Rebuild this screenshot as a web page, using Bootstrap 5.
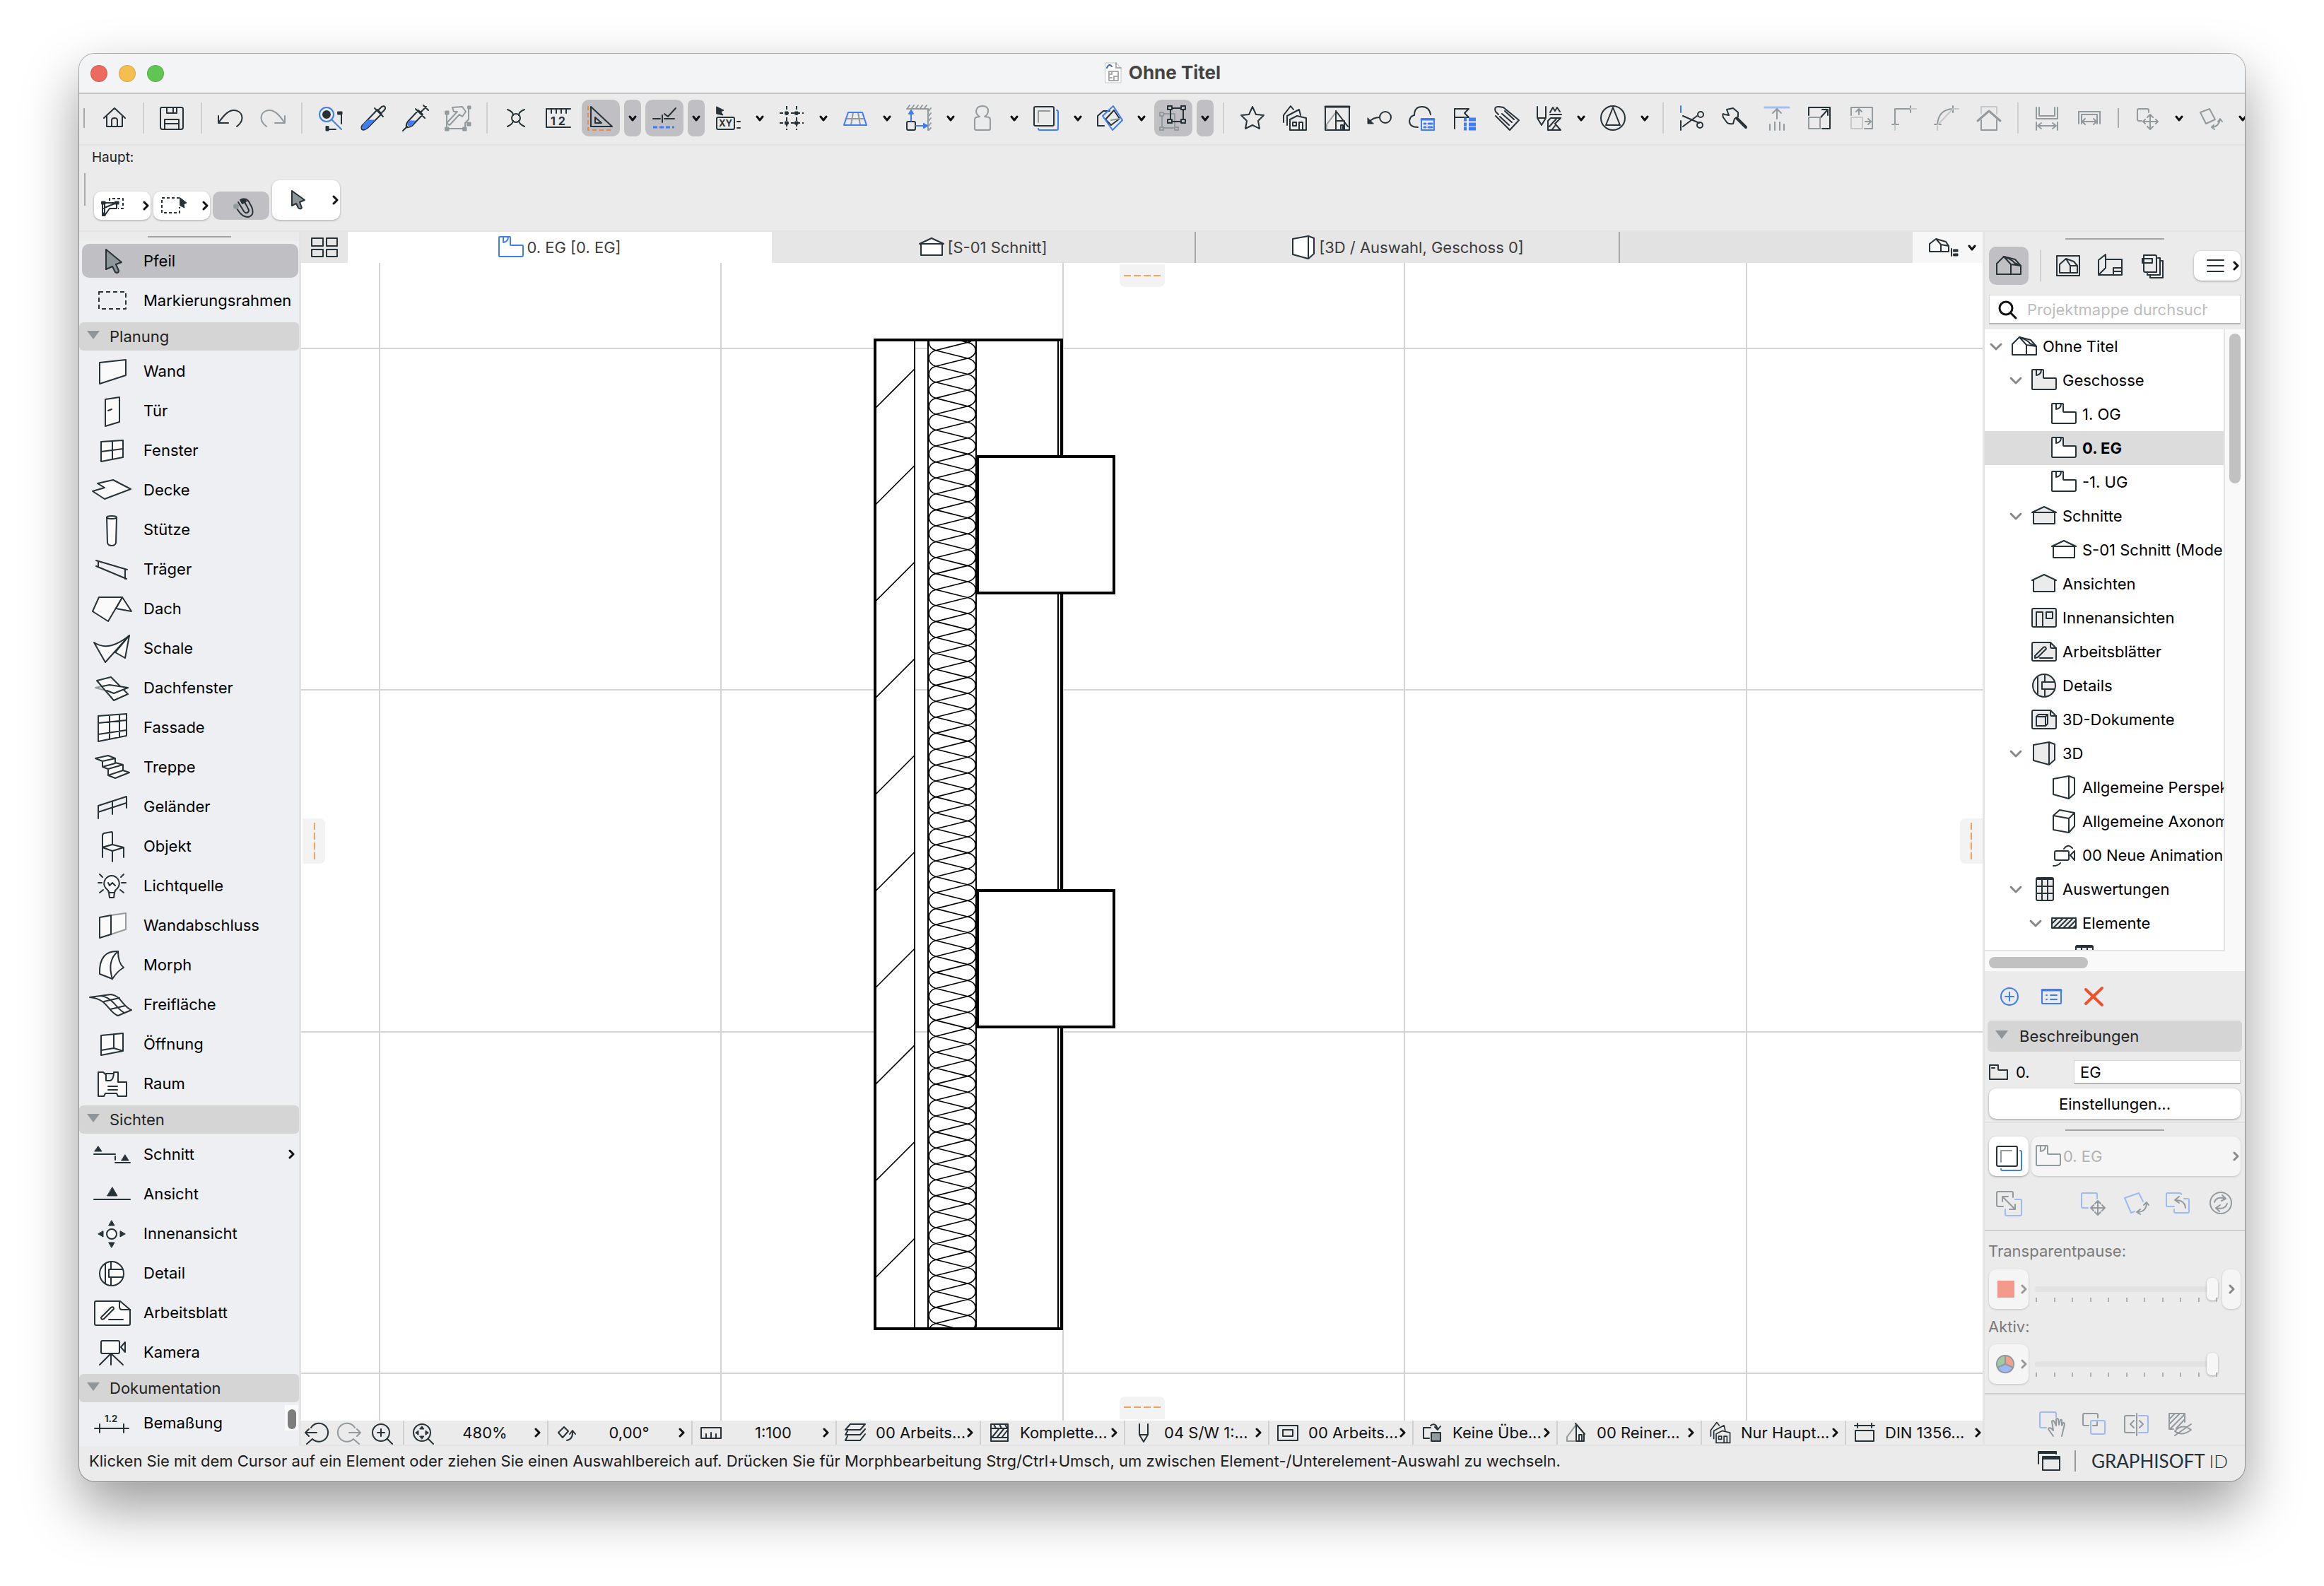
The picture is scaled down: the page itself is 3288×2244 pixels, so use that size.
<!DOCTYPE html>
<html lang="de">
<head>
<meta charset="utf-8">
<meta name="viewport" content="width=device-width, initial-scale=1">
<title>Ohne Titel</title>
<link href="https://cdn.jsdelivr.net/npm/bootstrap@5.3.0/dist/css/bootstrap.min.css" rel="stylesheet">
<style>
:root{--ink:#263238;--blue:#3f7df6;--mute:#939a9e;--panel:#ebebeb;--line:#d2d2d2;--hot:#c0bfc4}
body{font-family:Inter,"Liberation Sans",sans-serif;font-size:22px;line-height:28px;color:#000;background:#fff;padding:76px 112px 148px;height:100vh;overflow:hidden}
button,input{font:inherit;color:inherit}
button{background:none;border:0;padding:0}
svg{fill:none;stroke:currentColor;stroke-width:2;stroke-linejoin:round;stroke-linecap:round;color:var(--ink);flex:none;display:block;overflow:visible}
svg text{stroke:none;fill:currentColor;font-weight:700}
.sol{fill:currentColor}.nof{fill:none}.bl{stroke:var(--blue)}.gr{stroke:var(--mute)}
.frame{background:var(--panel);border-radius:22px;box-shadow:0 0 0 1px rgba(0,0,0,.3),0 36px 80px rgba(0,0,0,.4)}
.titlebar{height:57px;background:#f2f4f6;border-bottom:2px solid #c6c6c6;font-size:26px;font-weight:700;color:#444;padding-bottom:2px}
.lights{left:16px;top:16px;gap:16px}
.lights button{width:24px;height:24px;border-radius:50%;border:1px solid rgba(0,0,0,.12)}
/* toolbar */
.tools{height:73px;border-bottom:2px solid #e3e3e3;padding:0 0 3px 6px;overflow:hidden}
.grip{width:2px;height:28px;background:#a9a9a9;margin-right:12px;flex:none}
.tbtn{width:60px;height:52px;flex:none;display:flex;align-items:center;justify-content:center}
.tbtn svg{width:40px;height:40px}
.tarr{width:30px;height:52px;flex:none;display:flex;align-items:center;justify-content:center}
.tarr svg,.chv{width:14px;height:14px;stroke-width:3;color:#111}
.tbtn.on{width:54px;margin:0 3px;background:var(--hot);border-radius:10px}
.tarr.on{width:24px;margin:0 3px;background:var(--hot);border-radius:8px}
.tsep{width:2px;height:44px;background:#d0d0d0;margin:0 10px;flex:none}
.tsep.strong{background:#a9a9a9;height:28px}
.dim{color:var(--mute)}
/* info box */
.infobox{height:122px;border-bottom:2px solid #e3e3e3;padding:3px 0 0 7px}
.infobox label{font-size:19px;color:#222;padding-left:11px}
.infobox .optrow{height:74px;gap:4px}
.infobox .grip{height:46px;margin:8px 8px 0 0}
.opt{width:80px;height:40px;border-radius:10px;background:#fff;box-shadow:0 1px 3px rgba(0,0,0,.3);display:flex;align-items:center;justify-content:space-between;padding:0 0 0 10px}
.opt svg:first-child{width:36px;height:36px}
.opt.on{background:var(--hot);justify-content:center;padding:0;box-shadow:none}
.opt.tall{width:96px;height:56px;padding-left:20px}
/* left toolbox */
.toolbox{width:314px;background:#eeeff2;border-right:3px solid #e4e4e4;overflow:hidden}
.hbar{height:13px;background:var(--panel);display:flex;align-items:center;justify-content:center;flex:none}
.hbar span{width:118px;height:2px;background:#a3a3a3}
.hbar.tallbar{height:19px}
.tool{height:56px;width:100%;display:flex;align-items:center;padding-left:14px;gap:13px;flex:none;text-align:left}
.tool svg{width:64px;height:48px;fill:#fafafa}
.tool svg.chv{width:14px;height:14px;fill:none}
.tool.on{height:48px;margin:4px 1px 4px 4px;width:306px;padding-left:10px;border-radius:10px;background:var(--hot)}
.grp{height:40px;width:100%;background:#d5d5d5;border-radius:6px;margin:3px 0 1px;padding-left:11px;gap:14px;display:flex;align-items:center;color:#222;flex:none}
.grp .tri{width:18px;height:12px;background:#8f9599;clip-path:polygon(0 0,100% 0,50% 100%);margin-bottom:4px}
.sbox{width:19px;height:36px;background:#fafafa;right:1px;bottom:22px}
.sbox span{display:block;width:12px;height:28px;margin:6px auto 0 4px;border-radius:6px;background:#7d7d7d}
/* tabs */
.tabs{height:44px;background:#e2e2e2}
.tabs .tab{width:600px;background:#e6e6e6;border-right:2px solid #a9a9a9;color:#3c3c3c;gap:4px}
.tabs .tab.on{background:#fff;border:0}
.tabs .grid4{width:66px;background:#e6e6e6}
.tabs .pick{width:99px;background:#f7f7f7;gap:10px}
.tabs svg.i{width:36px;height:34px}
.stage{background:#fff}
/* view bar */
.viewbar{height:36px;border-bottom:2px solid #e3e3e3;color:#111}
.viewbar .cell{width:204px;border-left:2px solid #d0d0d0;height:34px;padding:0 7px 0 9px;display:flex;align-items:center;white-space:nowrap}
.viewbar .cell:last-child{flex:1 1 0;padding-right:0}
.viewbar .cell>span{flex:1 1 0;min-width:0}
.viewbar svg.i{width:34px;height:34px}
.viewbar .cell svg.i{margin-right:12px}
/* right panel */
.side{width:371px;border-left:3px solid #e4e4e4}
.side .hbar span{width:140px}
.pop{background:#fff;border-radius:10px;box-shadow:0 1px 3px rgba(0,0,0,.35)}
.navrow{padding:0 6px;height:54px;margin-top:2px}
.navb{width:60px;height:54px;display:flex;align-items:center;justify-content:center}
.navb svg{width:36px;height:34px}
.find{margin:14px 6px 7px;height:42px;background:#fff;border:1px solid #d5d5d5;border-bottom:2px solid #b5b5b5;padding:0 46px 0 13px;gap:14px}
.find input{border:0;outline:0;background:none;width:100%;min-width:0;padding:0}
.find input::placeholder{color:#bdbdbd;opacity:1}
.tree{height:880px;background:#fff;border-right:2px solid #e4e4e4;border-bottom:2px solid #e4e4e4;overflow:hidden;width:340px}
.node{height:48px;display:flex;align-items:center;padding-left:6px;white-space:nowrap;width:100%;text-align:left;flex:none}
.node .tw{width:20px;margin-right:12px;flex:none}
.node .tw svg{width:20px;height:14px;stroke-width:3;color:#888;margin:auto}
.node svg.i{width:36px;height:34px;margin-right:8px;fill:#fff}
.node svg.f{fill:#ebebeb}
.l1{padding-left:34px}.l2{padding-left:62px}.l3{padding-left:90px}
.track{background:#f9f9f9}
.knob{background:#c1c1c1;border-radius:8px}
.act{width:60px;height:52px;display:flex;align-items:center;justify-content:center}
.act svg{width:36px;height:34px}
.lite{background:#f5f5f5;box-shadow:0 1px 3px rgba(0,0,0,.18);border-radius:10px}
.rule{height:2px;background:#cfcfcf}
.opac{appearance:none;-webkit-appearance:none;width:100%;height:32px;background:none;display:block;margin:0}
.opac::-webkit-slider-runnable-track{height:8px;border-radius:4px;background:#e2e2e2}
.opac::-webkit-slider-thumb{-webkit-appearance:none;width:16px;height:32px;margin-top:-12px;border-radius:7px;background:#f6f6f6;box-shadow:0 1px 3px rgba(0,0,0,.3)}
.ticks{height:6px;padding:0 1px;margin-top:-4px}.ticks i{width:2px;height:6px;background:#b0b0b0}
.faded{color:#7a7a7a}
.storyname{min-width:0;height:34px;border:1px solid #d5d5d5;border-bottom:2px solid #b5b5b5;background:#fff;padding:0 8px}
.status{height:50px;padding:0 24px 8px 14px;color:#1c1c1c}
.brandmark{font-family:Lato,sans-serif;font-size:26px;color:var(--ink)}
</style>
<script src="https://cdn.jsdelivr.net/npm/bootstrap@5.3.0/dist/js/bootstrap.bundle.min.js"></script>
</head>
<body class="d-flex m-0">
<svg width="0" height="0" class="position-absolute" aria-hidden="true">
<symbol id="dn" viewBox="0 0 14 14"><path d="M3 5L7 10L11 5"/></symbol>
<symbol id="rt" viewBox="0 0 14 14"><path d="M5 2L10 7L5 12"/></symbol>
<symbol id="tw" viewBox="0 0 20 14"><path d="M3 4L10 11L17 4"/></symbol>
<symbol id="home3" viewBox="0 0 36 34"><path d="M1 29V14L11 4L27 8L35 17V29Z"/><path class="nof" d="M11 4L21 15V29M21 15L35 17M11 4C18 7 24 9 26 13L35 17"/></symbol>
<symbol id="storey" viewBox="0 0 36 34"><path d="M2 2H16Q17 2 17 3V13Q17 14 18 14H34Q35 14 35 15V28Q35 30 33 30H2Q1 30 1 29V3Q1 2 2 2Z"/><path class="nof" d="M7 2V10Q14 9 14 2"/></symbol>
<symbol id="sect" viewBox="0 0 36 34"><path d="M1 12L18 4L35 12Z"/><path d="M3 12H33V28H3Z"/></symbol>
<symbol id="elev" viewBox="0 0 36 34"><path d="M1 12L18 4L35 12H33V28H3V12Z" stroke="none"/><path class="nof" d="M1 12L18 4L35 12M3 12V28H33V12"/></symbol>
<symbol id="inner" viewBox="0 0 36 34"><rect x="1" y="4" width="34" height="26" rx="2"/><path class="nof" d="M7 30V9H16V30M21 9H30V18H21Z"/></symbol>
<symbol id="sheet" viewBox="0 0 36 34"><path d="M3 4H27L35 12V28Q35 30 33 30H3Q1 30 1 28V6Q1 4 3 4Z"/><path class="nof" d="M27 4V10Q27 12 29 12H35M12 26H30"/><path d="M5 26V23L17 11Q20 9 21 13L9 25Z"/></symbol>
<symbol id="detail" viewBox="0 0 36 34"><circle cx="18" cy="17" r="16"/><path class="nof" d="M9 4V30M19 1V12M19 22V33M33 12H15V22H33"/></symbol>
<symbol id="doc3" viewBox="0 0 36 34"><path d="M3 4H27L35 12V28Q35 30 33 30H3Q1 30 1 28V6Q1 4 3 4Z"/><path class="nof" d="M27 4V10Q27 12 29 12H35M7 13H20V26H7ZM7 13L10 10H23L20 13M23 10V23L20 26"/></symbol>
<symbol id="box3" viewBox="0 0 36 34"><path d="M3 5L25 1V33L3 27ZM25 1L33 4V26L25 33"/></symbol>
<symbol id="axo" viewBox="0 0 36 34"><path d="M3 9L25 13V33L3 29ZM3 9L12 1L33 5L25 13L3 9M33 5V24L25 33V13"/></symbol>
<symbol id="cam" viewBox="0 0 36 34"><rect x="5" y="11" width="20" height="13" rx="2"/><path d="M27 17L33 11V24ZM18 8Q24 0 30 7M3 32Q10 32 13 28" class="nof"/></symbol>
<symbol id="tab9" viewBox="0 0 36 34"><rect x="7" y="1" width="24" height="32" rx="2"/><path class="nof" d="M7 3H31M7 13H31M7 23H31M15 3V33M23 3V33"/></symbol>
<symbol id="hat" viewBox="0 0 36 34"><rect x="1" y="10" width="34" height="14"/><path class="nof" d="M1 18L9 10M3 24L16 11M10 24L23 11M17 24L30 11M24 24L35 13M31 24L35 20"/></symbol>
<symbol id="homes" viewBox="0 0 40 40"><path d="M4 26V16L14 3L18 8M9 30V17L26 8L28 16M13 37V22L23 17L36 20V37ZM17 31V26H22V31ZM26 37V26H31V37"/></symbol>
</svg>

<div class="frame flex-grow-1 d-flex flex-column overflow-hidden">
 <header class="titlebar position-relative d-flex align-items-center justify-content-center gap-2 flex-shrink-0">
  <div class="lights position-absolute d-flex"><button aria-label="Schließen" style="background:#ec6a5e"></button><button aria-label="Minimieren" style="background:#f4bf4f"></button><button aria-label="Vergrößern" style="background:#61c554"></button></div>
  <svg width="28" height="30" style="stroke-width:1"><path fill="#fff" stroke="#c4c4c4" d="M3 1H18L25 8V29H3Z"/><path stroke="#aaa" stroke-width="2" d="M18 1V8H25M8 13H21V26H8ZM12 13V17H8M15 26V20H21M8 22H12"/><path stroke="#3f5fbf" stroke-width="2" d="M5 8Q8 1 12 6"/></svg>
  <span>Ohne Titel</span>
 </header>

 <nav class="tools d-flex align-items-center flex-shrink-0" aria-label="Werkzeugleiste">
  <span class="grip"></span>
  <button class="tbtn" aria-label="Start"><svg><path d="M5 20L20 6L35 20M9 17V32H31V17M16 32V23Q16 20 20 20T24 23V32"/></svg></button><span class="tsep"></span>
  <button class="tbtn" aria-label="Sichern"><svg><path d="M5 5H33Q35 5 35 8V33Q35 36 32 36H6Q3 36 3 33V7Q3 5 5 5ZM12 5V13H26V5M21 6V12M9 36V22H29V36M10 28H28"/></svg></button><span class="tsep"></span>
  <button class="tbtn" aria-label="Widerrufen"><svg><path d="M3 17V27H17M3 27C12 14 18 9 25 9C35 9 43 21 29 32"/></svg></button>
  <button class="tbtn dim" aria-label="Wiederholen"><svg class="dim"><path d="M37 17V27H23M37 27C28 14 22 9 15 9C5 9 -3 21 11 32"/></svg></button><span class="tsep"></span>
  <button class="tbtn" aria-label="Suchen"><svg><circle class="bl" cx="14" cy="15" r="10"/><path class="bl" d="M22 23L35 36"/><circle class="sol" cx="14" cy="15" r="5"/><path d="M35 13V28M14 36H27"/><path class="sol" d="M30 11H36V15H30ZM13 32V38H17V32Z" stroke-width="1"/></svg></button>
  <button class="tbtn" aria-label="Parameter aufnehmen"><svg><path d="M4 36Q2 32 7 28L26 8L32 14L12 34Q7 38 4 36ZM22 6L34 18M27 9L32 4Q36 2 37 5Q38 8 31 13"/><path d="M5 35Q4 31 8 27L12 23H22L12 33Q8 37 5 35Z" fill="#3f7df6" class="bl" stroke-width="1"/></svg></button>
  <button class="tbtn" aria-label="Parameter übertragen"><svg><path d="M2 38L8 32M7 33Q6 29 9 25L24 9L30 15L15 31Q10 34 7 33ZM20 7L33 20M27 12L35 4M31 2L38 9"/><path d="M9 30Q8 28 11 24H20L15 30Q11 32 9 30Z" fill="#3f7df6" class="bl" stroke-width="1"/></svg></button>
  <button class="tbtn" aria-label="Bearbeiten"><svg class="dim"><path d="M4 12V35H30V27L35 22V5M12 5L26 4L31 11L26 18L22 15L8 30L4 27L19 11H14Z"/><path class="sol" d="M2 10H7V15H2ZM2 33H7V38H2ZM27 33H32V38H27ZM33 26H38V31H33ZM34 3H38V7H34Z" stroke-width="1"/></svg></button><span class="tsep"></span>
  <button class="tbtn" aria-label="Schnittpunkt"><svg><path d="M8 8Q16 11 16 16M32 8Q24 11 24 16M8 32Q16 28 16 24M32 32Q24 28 24 24"/><circle cx="20" cy="20" r="6"/></svg></button>
  <button class="tbtn" aria-label="Maße"><svg><path d="M37 7H3V33H37M10 8V13M17 8V13M24 8V13M31 8V13"/><text x="9" y="30" font-size="16">1 2</text></svg></button>
  <button class="tbtn on" aria-label="Hilfslinien"><svg><path d="M6 4V32H36ZM12 19V27H21Z"/><path stroke="#f0883a" stroke-dasharray="6 4" stroke-linecap="butt" d="M2 3V37H38"/></svg></button><button class="tarr on" aria-label="Mehr"><svg><use href="#dn"/></svg></button>
  <button class="tbtn on" aria-label="Fangpunkte"><svg><path d="M20 14L25 18L36 6M4 21H14M20 21H34M17 16V26"/><path class="bl" stroke-dasharray="6 3" stroke-linecap="butt" stroke-width="3" d="M4 33H34"/></svg></button><button class="tarr on" aria-label="Mehr"><svg><use href="#dn"/></svg></button>
  <button class="tbtn" aria-label="Koordinaten"><svg><path class="sol" d="M4 4L14 9L10 11L13 16L4 14Z" stroke-width="1"/><rect x="4" y="19" width="25" height="17" rx="2"/><path d="M33 25H37M33 34H37"/><text x="7" y="32" font-size="13">XY</text></svg></button><button class="tarr" aria-label="Mehr"><svg><use href="#dn"/></svg></button>
  <button class="tbtn" aria-label="Raster"><svg><path stroke-dasharray="5 3" stroke-linecap="butt" d="M13 3V37M27 3V37M3 13H37M3 27H37"/><path class="sol" d="M11 11H15V15H11ZM25 11H29V15H25ZM11 25H15V29H11ZM25 25H29V29H25Z" stroke-width="1"/></svg></button><button class="tarr" aria-label="Mehr"><svg><use href="#dn"/></svg></button>
  <button class="tbtn" aria-label="Arbeitsebene"><svg><path class="gr" d="M7 21H33M17 12L14 30M24 12L27 30"/><path class="bl" d="M10 12H30L36 30H4Z"/></svg></button><button class="tarr" aria-label="Mehr"><svg><use href="#dn"/></svg></button>
  <button class="tbtn" aria-label="Ursprung"><svg><path class="gr" d="M3 7H33V37M4 6L7 2M10 6L13 2M16 6L19 2M22 6L25 2M28 6L31 2M34 10L37 6M34 17L37 13M34 24L37 20M34 31L37 27M34 37L37 34"/><rect x="3" y="25" width="12" height="12" rx="2"/><path class="bl" d="M9 24V10M6 14L9 9L12 14ZM16 31H31M27 28L32 31L27 34Z" fill="#3f7df6"/></svg></button><button class="tarr" aria-label="Mehr"><svg><use href="#dn"/></svg></button>
  <button class="tbtn" aria-label="Schwerkraft"><svg class="dim"><path d="M16 18Q11 15 11 10Q12 3 20 3Q28 3 28 10Q28 15 23 18L29 19Q31 20 31 22V35Q31 37 29 37H11Q9 37 9 35V22Q9 20 11 19Z"/></svg></button><button class="tarr" aria-label="Mehr"><svg><use href="#dn"/></svg></button>
  <button class="tbtn" aria-label="Transparentpause"><svg><rect x="3" y="4" width="28" height="27" rx="2"/><path class="gr" d="M9 26V10H25"/><path class="bl" d="M35 9Q37 9 37 11V35Q37 37 35 37H11Q9 37 9 35"/></svg></button><button class="tarr" aria-label="Mehr"><svg><use href="#dn"/></svg></button>
  <button class="tbtn" aria-label="Schnittebenen"><svg><path d="M12 31H3V17L11 10L20 10"/><path d="M14 22L26 9L34 21L22 30Z"/><path class="gr" d="M22 23L34 21"/><path class="bl" d="M25 3L38 23L24 37L10 17Z"/></svg></button><button class="tarr" aria-label="Mehr"><svg><use href="#dn"/></svg></button>
  <button class="tbtn on" aria-label="Gruppen"><svg><path class="gr" d="M4 14H22V34H4Z"/><path d="M16 6H34V25H16Z"/><path fill="#c0bfc4" d="M12 3H18V8H12ZM31 3H37V8H31ZM12 22H18V27H12ZM31 22H37V27H31Z"/><path class="gr" fill="#c0bfc4" d="M1 12H6V17H1ZM1 33H6V37H1ZM22 33H27V37H22Z"/></svg></button><button class="tarr on" aria-label="Mehr"><svg><use href="#dn"/></svg></button><span class="tsep"></span>
  <button class="tbtn" aria-label="Favoriten"><svg><path d="M20 4L25 15L36 16L28 24L30 35L20 30L10 35L12 24L4 16L15 15Z"/></svg></button>
  <button class="tbtn" aria-label="Projektmappe"><svg><use href="#homes"/></svg></button>
  <button class="tbtn" aria-label="Ausschnitt"><svg><path stroke-width="3" d="M3 4H37"/><path d="M3 4H37V37H3Z"/><path class="gr" d="M5 36V29L18 12"/><path d="M18 10L35 32M18 10V37M20 24H30V37M25 37V30H28V37"/></svg></button>
  <button class="tbtn" aria-label="Etikett"><svg><circle cx="28" cy="19" r="8"/><path d="M20 19Q10 19 5 26"/><path class="sol" d="M3 20V28H11Z" stroke-width="1"/></svg></button>
  <button class="tbtn" aria-label="Cloud"><svg><path d="M14 33Q2 33 2 24Q3 17 9 16Q9 4 20 4Q30 4 32 15"/><path class="bl" d="M19 21H37V37H19Z"/><path class="bl" stroke-width="3" d="M19 22H37M23 28H25M29 28H34M23 33H25M29 33H34"/></svg></button>
  <button class="tbtn" aria-label="Issues"><svg><path d="M6 35V7H26L20 13L26 19H7"/><path class="bl" stroke-width="5" stroke-linecap="butt" d="M19 22H23M26 22H36M19 29H23M26 29H36M19 35H23M26 35H36"/></svg></button>
  <button class="tbtn" aria-label="Klassifizierung"><svg><path d="M8 15L4 11Q1 3 9 4L15 5L37 23L24 37L4 17M13 14L27 26M17 10L30 22M10 18L23 30"/></svg></button>
  <button class="tbtn" aria-label="Baustoffe"><svg><path d="M3 4V20L9 30L15 20V4M3 20H15M21 12L25 5L28 10L31 5L35 11M21 15H37M18 37H36L28 28L36 20H22L18 24ZM20 32L30 21M24 36L28 31"/></svg></button><button class="tarr" aria-label="Mehr"><svg><use href="#dn"/></svg></button>
  <button class="tbtn" aria-label="Norden"><svg><circle cx="20" cy="20" r="17"/><path d="M20 5L30 30H10Z"/></svg></button><button class="tarr" aria-label="Mehr"><svg><use href="#dn"/></svg></button><span class="tsep"></span>
  <button class="tbtn" aria-label="Trennen"><svg><path class="bl" d="M4 3V12"/><path d="M4 24V37M7 17L30 27M7 32L27 17"/><circle cx="32" cy="15" r="4"/><circle cx="31" cy="30" r="4"/></svg></button>
  <button class="tbtn" aria-label="Verändern"><svg><path d="M9 8L18 6L25 12V18L20 21L18 28Q11 29 9 26L4 19Q2 12 6 15L12 16Z"/><path stroke-width="4" d="M23 20L36 33"/></svg></button>
  <button class="tbtn" aria-label="Anheben"><svg class="dim"><path stroke="#a3bff5" stroke-width="3" d="M3 5H37"/><path d="M20 21V8M14 13L20 7L26 13M10 29V37M17 26V37M24 26V37M30 29V37"/></svg></button>
  <button class="tbtn" aria-label="Größe ändern"><svg><path d="M5 16V5H35V35H24M22 19L32 8M24 8H32V16"/><path class="gr" d="M5 19H21V35H5Z"/></svg></button>
  <button class="tbtn" aria-label="Strecken"><svg class="dim"><path d="M5 16V5H35V35H24"/><path stroke="#c6c8ca" d="M5 19H21V35H5Z"/><path d="M16 15V8M12 11L16 7L20 11M25 25H33M29 21L33 25L29 29"/></svg></button>
  <button class="tbtn" aria-label="Ecke"><svg class="dim"><path d="M7 30V7H29M3 29H12M29 3V12"/><path stroke="#c6c8ca" d="M7 30V37M29 7H37"/></svg></button>
  <button class="tbtn" aria-label="Abrunden"><svg class="dim"><path d="M7 30Q8 8 29 7M3 29H12M29 3V12"/><path stroke="#c6c8ca" d="M7 37V30L29 7H37"/></svg></button>
  <button class="tbtn" aria-label="Dach anpassen"><svg class="dim"><path stroke="#c6c8ca" d="M9 14V4H31V14"/><path d="M9 23V37H31V23"/><path stroke-width="3" d="M4 24L20 10L36 24"/></svg></button><span class="tsep"></span>
  <button class="tbtn" aria-label="Verteilen"><svg class="dim"><path d="M5 5V21H35V5M9 5V17H31V5M5 26V37M35 26V37M7 31H33M12 27L7 31L12 35M28 27L33 31L28 35"/></svg></button>
  <button class="tbtn" aria-label="Ausrichten"><svg class="dim"><path d="M5 28V11H35V28M9 28V15H31V28M10 25H30M14 21L10 25L14 29M26 21L30 25L26 29"/></svg></button><span class="tsep strong"></span>
  <button class="tbtn" aria-label="Bewegen"><svg class="dim"><path d="M12 24H8Q6 24 6 22V9Q6 7 8 7H20Q22 7 22 9V12M24 16V35M14 25H35M20 19L24 15L28 19M20 32L24 36L28 32M17 22L14 25L17 28M32 22L35 25L32 28"/></svg></button><button class="tarr" aria-label="Mehr"><svg><use href="#dn"/></svg></button>
  <button class="tbtn" aria-label="Drehen"><svg class="dim"><path d="M5 12L18 7L26 22L13 28ZM22 33Q31 32 33 22M30 25L33 21L36 25M24 30L21 33L25 36"/></svg></button><button class="tarr" aria-label="Mehr"><svg><use href="#dn"/></svg></button>
 </nav>

 <section class="infobox flex-shrink-0">
  <label class="d-block">Haupt:</label>
  <div class="optrow d-flex align-items-end">
   <span class="grip align-self-start"></span>
   <button class="opt" aria-label="Auswahlmethode"><svg><path d="M2 14H22V22H12L5 32H2ZM5 14V32M2 22L22 14"/><path stroke-dasharray="4 3" stroke-linecap="butt" d="M12 11V8H31V22H24"/><path class="sol" d="M1 12H6V16H1ZM20 12H25V16H20ZM2 28H6V32H2Z" stroke-width="1"/></svg><svg class="chv"><use href="#rt"/></svg></button>
   <button class="opt" aria-label="Rahmen"><svg><path stroke-dasharray="4 3" stroke-linecap="butt" d="M27 7H2V28H27V20"/><path class="sol" d="M28 7L37 14L33 16L34 21L28 18Z" stroke-width="1"/></svg><svg class="chv"><use href="#rt"/></svg></button>
   <button class="opt on" aria-label="Magnet"><svg><path d="M14 13L22 26Q25 30 28 27Q30 25 28 22L21 9Q27 7 31 16Q36 24 34 30Q30 36 23 33Q18 32 10 19"/><path class="sol" d="M17 10Q22 6 25 12L20 15Z"/><circle cx="11" cy="19" r="4" fill="#939a9e" stroke="none"/></svg></button>
   <button class="opt tall" aria-label="Pfeil"><svg><path fill="#8e9599" d="M8 5L26 18L19 21L22 29Q20 32 17 29L14 23L8 26Z"/></svg><svg class="chv"><use href="#rt"/></svg></button>
  </div>
 </section>

 <div class="d-flex flex-grow-1" style="min-height:0">
  <aside class="toolbox position-relative d-flex flex-column flex-shrink-0">
   <div class="hbar"><span></span></div>
   <button class="tool on"><svg><path fill="#8e9599" d="M24 8L46 26L38 29L42 38Q42 41 39 41L37 40L33 32L24 36Z"/></svg>Pfeil</button>
   <button class="tool"><svg><path class="nof" stroke-dasharray="6 4" stroke-linecap="butt" d="M14 12H52V36H14Z"/></svg>Markierungsrahmen</button>
   <button class="grp"><span class="tri"></span>Planung</button>
   <button class="tool"><svg><path d="M15 12L52 8V30L15 42Z"/></svg>Wand</button>
   <button class="tool"><svg><path d="M23 8L43 5V40L23 46ZM27 24L32 22"/></svg>Tür</button>
   <button class="tool"><svg><path d="M17 12L48 10V34L17 40ZM33 11V37M17 26L48 22"/></svg>Fenster</button>
   <button class="tool"><svg><path d="M5 26L22 37L59 23L34 10L12 15L22 21Z"/></svg>Decke</button>
   <button class="tool"><svg><path d="M25 7L26 43Q27 47 32 47T38 43L39 7"/><ellipse cx="32" cy="7" rx="7" ry="2"/></svg>Stütze</button>
   <button class="tool"><svg><path d="M10 12L54 25M10 20L53 38M13 13V21M51 24V38"/></svg>Träger</button>
   <button class="tool"><svg><path d="M38 24L47 8L60 28Z"/><path d="M14 8H47L27 42L5 28Z"/></svg>Dach</button>
   <button class="tool"><svg><path d="M57 6L51 38L37 30Z"/><path d="M7 16Q28 30 57 6L23 44Z"/></svg>Schale</button>
   <button class="tool"><svg><path class="gr" d="M24 28L9 24L19 22"/><path d="M11 14L31 9L55 33L35 42Z"/><path d="M19 22L29 20L55 24L35 32L25 28"/></svg>Dachfenster</button>
   <button class="tool"><svg><path d="M13 8L53 5V36L13 44ZM29 7V41M43 6V38M13 18L53 14M13 34L53 28"/></svg>Fassade</button>
   <button class="tool"><svg><path d="M9 12L27 8L37 12L19 16ZM19 16V24L37 19V12M19 24L27 27L48 21L37 18M27 27V36L48 29V21M27 36L37 40L57 32L48 29"/></svg>Treppe</button>
   <button class="tool"><svg><path class="nof" d="M13 41V23L53 10V26M13 32L53 19M33 17V35"/></svg>Geländer</button>
   <button class="tool"><svg><path d="M19 40V9Q19 7 21 6L32 4Q33 4 33 6V22L19 26"/><path d="M19 26L33 22L49 26L33 31ZM33 31V46M49 26V40"/></svg>Objekt</button>
   <button class="tool"><svg><path d="M28 34Q28 31 24 28Q19 22 23 15Q27 10 32 10T41 15Q45 22 40 28Q36 31 36 34L35 41H29L28 34H36"/><path class="nof" d="M27 20L29 24L33 20L37 24M15 8L19 12M49 8L45 12M13 20H18M46 20H52M15 34L20 30M49 34L44 30"/></svg>Lichtquelle</button>
   <button class="tool"><svg><path class="gr" d="M31 10L52 7V30L31 37"/><path d="M15 13L31 10V37L15 42Z"/></svg>Wandabschluss</button>
   <button class="tool"><svg><path d="M15 37C14 14 24 4 41 5C41 18 44 24 49 28Q40 33 33 44Z"/><path class="nof" d="M41 5Q25 18 33 44"/></svg>Morph</button>
   <button class="tool"><svg><path d="M1 14L31 10C46 12 46 26 60 32L41 40C27 36 27 16 1 14Z"/><path class="nof" d="M21 20L43 15M30 31L51 26M16 12C34 14 38 30 50 36"/></svg>Freifläche</button>
   <button class="tool"><svg><path d="M17 12L48 9V34L17 40ZM35 10V30L17 33M35 30L48 34"/></svg>Öffnung</button>
   <button class="tool"><svg><path d="M13 8H20L24 12V20H30Q35 18 35 8H41V22H53V42H41L39 38H23L21 42H13Z"/><path class="nof" d="M24 10H35M27 28H40M27 33H40"/></svg>Raum</button>
   <button class="grp"><span class="tri"></span>Sichten</button>
   <button class="tool"><svg><path class="nof" d="M7 24H37M37 27V32M37 36H58"/><path class="sol" stroke-width="1" d="M8 20H18L13 13ZM46 33H56L51 25Z"/></svg>Schnitt<svg class="chv ms-auto me-1"><use href="#rt"/></svg></button>
   <button class="tool"><svg><path d="M7 32H58"/><path class="sol" stroke-width="1" d="M26 27H40L33 15Z"/></svg>Ansicht</button>
   <button class="tool"><svg><circle cx="32" cy="25" r="7"/><path class="sol" stroke-width="1" d="M28 13H36L32 6ZM28 37H36L32 44ZM20 21V29L13 25ZM44 21V29L51 25Z"/></svg>Innenansicht</button>
   <button class="tool"><svg><circle cx="32" cy="25" r="17"/><path class="nof" d="M23 11V39M31 8V19M31 30V42M48 19H28V30H48"/></svg>Detail</button>
   <button class="tool"><svg><path d="M10 8H44L58 20V40Q58 42 56 42H10Q8 42 8 40V10Q8 8 10 8Z"/><path class="nof" d="M43 8V16Q43 20 47 20H58M28 34H48M17 31L31 17Q35 15 35 19L21 33Q17 35 17 31Z"/></svg>Arbeitsblatt</button>
   <button class="tool"><svg><rect x="17" y="8" width="26" height="18" rx="2"/><path d="M45 17L51 10V24ZM31 26L15 42M31 26V42M31 26L48 42"/></svg>Kamera</button>
   <button class="grp"><span class="tri"></span>Dokumentation</button>
   <button class="tool"><svg><path d="M8 32H56M15 26V38M49 26V38"/><text x="22" y="23" font-size="13">1.2</text></svg>Bemaßung</button>
   <div class="sbox position-absolute"><span></span></div>
  </aside>

  <main class="d-flex flex-column flex-grow-1" style="min-width:0">
   <div class="tabs d-flex flex-shrink-0">
    <button class="grid4 d-flex align-items-center justify-content-center" aria-label="Übersicht"><svg width="38" height="28"><path d="M1 1H17V12H1ZM22 1H37V12H22ZM1 17H17V27H1ZM22 17H37V27H22Z"/></svg></button>
    <button class="tab on d-flex align-items-center justify-content-center"><svg class="i" style="color:var(--blue)"><use href="#storey"/></svg>0. EG [0. EG]</button>
    <button class="tab d-flex align-items-center justify-content-center"><svg class="i" style="fill:#fff"><use href="#sect"/></svg>[S-01 Schnitt]</button>
    <button class="tab d-flex align-items-center justify-content-center"><svg class="i" style="fill:#fff"><use href="#box3"/></svg>[3D / Auswahl, Geschoss 0]</button>
    <button class="pick ms-auto d-flex align-items-center justify-content-end pe-2" aria-label="Ansicht wählen"><svg width="44" height="28"><path d="M1 20V9L10 2L24 6L28 12V20ZM10 2L17 10V20M17 10L28 12M32 16V26"/><path class="sol" stroke-width="1" d="M35 17H41V20H35ZM35 23H41V26H35Z"/></svg><svg class="chv"><use href="#dn"/></svg></button>
   </div>
   <div class="stage flex-grow-1" style="min-height:0">
    <svg width="100%" height="100%" viewBox="426 372 2379 1638" role="img" aria-label="Grundriss" style="color:#000;stroke-linecap:butt;stroke-linejoin:miter">
     <clipPath id="cavity"><rect x="1313" y="481" width="68" height="1399"/></clipPath>
     <path stroke="#d4d4d4" d="M537 372V2010M1020 372V2010M1504 372V2010M1987 372V2010M2471 372V2010M426 493H2805M426 976H2805M426 1460H2805M426 1943H2805"/>
     <path fill="#fff" stroke="none" d="M1238 481H1294V1880H1238ZM1313 481H1502V1880H1313Z"/>
     <path id="brick" stroke-width="1.6"/>
     <path id="wool" stroke-width="1.6" clip-path="url(#cavity)"/>
     <path d="M1294 481V1880M1313 481V1880M1381 481V1880M1497 481V1880"/>
     <rect x="1238" y="481" width="264" height="1399" stroke-width="4"/>
     <rect x="1383" y="646" width="193" height="193" fill="#fff" stroke-width="4"/>
     <rect x="1383" y="1260" width="193" height="193" fill="#fff" stroke-width="4"/>
     <g fill="#f3f3f3" stroke="none"><path d="M1584 374H1648V398Q1648 406 1640 406H1592Q1584 406 1584 398ZM1584 2008H1648V1984Q1648 1976 1640 1976H1592Q1584 1976 1584 1984ZM428 1158H452Q460 1158 460 1166V1214Q460 1222 452 1222H428ZM2805 1158H2781Q2773 1158 2773 1166V1214Q2773 1222 2781 1222H2805Z"/></g>
     <path stroke="#f2a45f" stroke-dasharray="10 4" d="M1590 390H1642M1590 1991H1642M445 1164V1216M2789 1164V1216"/>
    </svg>
   </div>
   <div class="viewbar d-flex align-items-center flex-shrink-0">
    <div class="d-flex align-items-center" style="width:144px;padding-left:5px;gap:12px">
     <button aria-label="Zurück"><svg class="i"><path d="M9 10A13 13 0 1 1 11 26M1 17H17M6 12L1 17L6 22M11 26L3 33"/></svg></button>
     <button aria-label="Vor"><svg class="i dim"><path d="M25 10A13 13 0 1 0 23 26M17 17H33M28 12L33 17L28 22M23 26L31 33"/></svg></button>
     <button aria-label="Zoom"><svg class="i"><circle cx="16" cy="17" r="12"/><path d="M11 17H21M16 12V22M25 26L32 33"/></svg></button>
    </div>
    <button class="cell"><svg class="i"><circle cx="16" cy="17" r="12"/><path d="M25 26L32 33"/><path class="sol" stroke-width="1" d="M16 8L19 12H13ZM16 26L19 22H13ZM7 17L11 14V20ZM25 17L21 14V20Z"/></svg><span class="pe-2">480%</span><svg class="chv"><use href="#rt"/></svg></button>
    <button class="cell"><svg class="i"><path d="M5 17L13 9L19 15L11 24ZM17 28Q26 26 25 15M21 19L25 14L29 19"/></svg><span class="pe-2">0,00°</span><svg class="chv"><use href="#rt"/></svg></button>
    <button class="cell"><svg class="i"><path d="M3 10H31V25H3ZM10 25V19M17 25V17M24 25V19"/></svg><span class="pe-2">1:100</span><svg class="chv"><use href="#rt"/></svg></button>
    <button class="cell"><svg class="i"><path d="M10 5H31L24 13H3ZM6 15L3 20H24L31 12M6 22L3 28H24L31 19"/></svg><span class="text-start">00 Arbeits...</span><svg class="chv"><use href="#rt"/></svg></button>
    <button class="cell"><svg class="i"><path d="M5 5H29V29H5ZM5 11H29M5 24H29M7 23L16 12M14 23L23 12M21 23L28 14M9 5L12 11M17 5L20 11M25 5L28 11"/></svg><span class="text-start">Komplette...</span><svg class="chv"><use href="#rt"/></svg></button>
    <button class="cell"><svg class="i"><path d="M11 5V20L17 30L23 20V5M11 20H23"/></svg><span class="text-start">04 S/W 1:...</span><svg class="chv"><use href="#rt"/></svg></button>
    <button class="cell"><svg class="i"><path d="M3 7H31V28H3ZM10 13H24V22H10Z"/></svg><span class="text-start">00 Arbeits...</span><svg class="chv"><use href="#rt"/></svg></button>
    <button class="cell"><svg class="i"><path d="M13 25H5V10H15M15 7Q22 2 25 12M21 9L25 13L29 8"/><path fill="#939a9e" d="M16 17H29V29H16Z"/></svg><span class="text-start">Keine Übe...</span><svg class="chv"><use href="#rt"/></svg></button>
    <button class="cell"><svg class="i"><path class="gr" d="M4 29V23L16 7M4 29H15"/><path d="M16 4L29 19M17 6V29H28V18M21 29V20H25V29"/></svg><span class="text-start">00 Reiner...</span><svg class="chv"><use href="#rt"/></svg></button>
    <button class="cell"><svg class="i"><use href="#homes"/></svg><span class="text-start">Nur Haupt...</span><svg class="chv"><use href="#rt"/></svg></button>
    <button class="cell"><svg class="i"><path d="M4 14H30V29H4ZM3 7H31M7 4V10M27 4V10"/></svg><span class="text-start">DIN 1356...</span><svg class="chv"><use href="#rt"/></svg></button>
   </div>
  </main>

  <aside class="side d-flex flex-column flex-shrink-0">
   <div class="hbar tallbar"><span></span></div>
   <div class="navrow d-flex align-items-center">
    <button class="navb" style="width:56px;background:var(--hot);border-radius:10px" aria-label="Projekt"><svg><use href="#home3"/></svg></button>
    <span class="tsep" style="margin:0 8px 0 16px"></span>
    <button class="navb" aria-label="Ausschnitte"><svg><path d="M2 3H34V31H2ZM6 27V15L15 7L26 11L31 17V27ZM15 7L21 17V27M21 17L31 17"/></svg></button>
    <button class="navb" aria-label="Layoutbuch"><svg><path d="M1 29V9L11 1V20L1 30H34V8H11M22 30V20H34M22 25H34"/></svg></button>
    <button class="navb" aria-label="Publisher"><svg><path d="M5 2H21Q23 2 23 4V26H7Q5 26 5 24ZM3 7H17V13H3ZM25 6H28V30H10V28M29 10H32V34H14V31"/></svg></button>
    <button class="pop ms-auto d-flex align-items-center justify-content-end gap-2" style="width:66px;height:42px" aria-label="Menü"><svg width="26" height="20"><path d="M1 2H24M1 10H24M1 18H24"/></svg><svg class="chv"><use href="#rt"/></svg></button>
   </div>
   <div class="find d-flex align-items-center"><svg width="26" height="28" style="stroke-width:3;color:#111"><circle cx="10" cy="12" r="9"/><path d="M17 19L24 26"/></svg><input type="text" placeholder="Projektmappe durchsuchen" aria-label="Projektmappe durchsuchen"></div>
   <div class="d-flex track">
    <div class="tree d-flex flex-column">
     <button class="node"><span class="tw"><svg><use href="#tw"/></svg></span><svg class="i"><use href="#home3"/></svg>Ohne Titel</button>
     <button class="node l1"><span class="tw"><svg><use href="#tw"/></svg></span><svg class="i f"><use href="#storey"/></svg>Geschosse</button>
     <button class="node l2"><span class="tw"></span><svg class="i"><use href="#storey"/></svg>1. OG</button>
     <button class="node l2 fw-bold" style="background:#dcdcdc"><span class="tw"></span><svg class="i"><use href="#storey"/></svg>0. EG</button>
     <button class="node l2"><span class="tw"></span><svg class="i"><use href="#storey"/></svg>-1. UG</button>
     <button class="node l1"><span class="tw"><svg><use href="#tw"/></svg></span><svg class="i f"><use href="#sect"/></svg>Schnitte</button>
     <button class="node l2"><span class="tw"></span><svg class="i"><use href="#sect"/></svg>S-01 Schnitt (Modell)</button>
     <button class="node l1"><span class="tw"></span><svg class="i f"><use href="#elev"/></svg>Ansichten</button>
     <button class="node l1"><span class="tw"></span><svg class="i f"><use href="#inner"/></svg>Innenansichten</button>
     <button class="node l1"><span class="tw"></span><svg class="i f"><use href="#sheet"/></svg>Arbeitsblätter</button>
     <button class="node l1"><span class="tw"></span><svg class="i f"><use href="#detail"/></svg>Details</button>
     <button class="node l1"><span class="tw"></span><svg class="i f"><use href="#doc3"/></svg>3D-Dokumente</button>
     <button class="node l1"><span class="tw"><svg><use href="#tw"/></svg></span><svg class="i f"><use href="#box3"/></svg>3D</button>
     <button class="node l2"><span class="tw"></span><svg class="i"><use href="#box3"/></svg>Allgemeine Perspektive</button>
     <button class="node l2"><span class="tw"></span><svg class="i"><use href="#axo"/></svg>Allgemeine Axonometrie</button>
     <button class="node l2"><span class="tw"></span><svg class="i"><use href="#cam"/></svg>00 Neue Animation</button>
     <button class="node l1"><span class="tw"><svg><use href="#tw"/></svg></span><svg class="i f"><use href="#tab9"/></svg>Auswertungen</button>
     <button class="node l2"><span class="tw"><svg><use href="#tw"/></svg></span><svg class="i f"><use href="#hat"/></svg>Elemente</button>
     <button class="node l3" aria-label="Auswertung"><span class="tw"></span><svg class="i f"><use href="#tab9"/></svg></button>
    </div>
    <div class="knob" style="width:16px;height:212px;margin:6px 0 0 6px"></div>
   </div>
   <div class="track" style="height:28px;padding:8px 6px"><div class="knob" style="width:140px;height:16px"></div></div>
   <div class="d-flex align-items-center" style="height:70px;padding:2px 0 0 5px">
    <button class="act" aria-label="Neu"><svg style="color:var(--blue)"><circle cx="18" cy="17" r="12"/><path d="M12 17H24M18 11V23"/></svg></button>
    <button class="act" aria-label="Eigenschaften"><svg style="color:var(--blue)"><rect x="4" y="7" width="27" height="20" rx="1"/><path stroke-width="3" d="M4 8H31"/><path d="M10 15H11M10 21H11M16 15H25M16 21H25"/></svg></button>
    <button class="act" aria-label="Löschen"><svg style="color:#ee512c;stroke-width:4"><path d="M6 7L29 29M29 5L6 27"/></svg></button>
   </div>
   <button class="grp" style="width:360px;height:44px;margin:0 4px;gap:16px"><span class="tri"></span>Beschreibungen</button>
   <div class="d-flex align-items-center" style="padding:2px 6px 0;height:56px;gap:10px">
    <svg width="28" height="26"><path d="M1 3H13V9Q13 10 15 10H26V23H1ZM4 7H8"/></svg><label for="nm" class="flex-shrink-0" style="width:72px">0.</label>
    <input id="nm" type="text" value="EG" class="storyname flex-grow-1">
   </div>
   <button class="pop" style="margin:-4px 6px 5px;height:43px">Einstellungen...</button>
   <div class="rule" style="background:#e0e0e0;height:1px"></div>
   <div class="hbar tallbar"><span></span></div>
   <div class="d-flex gap-1" style="padding:0 6px;height:56px">
    <button class="pop navb" style="width:56px;height:56px" aria-label="Transparentpause"><svg><rect x="1" y="3" width="29" height="28" rx="2"/><path class="gr" d="M7 25V9H22"/><path class="bl" d="M34 9Q36 9 36 11V35Q36 37 34 37H9Q7 37 7 35"/></svg></button>
    <button class="lite flex-grow-1 d-flex align-items-center" style="padding:0 0 0 6px;gap:3px;color:#b2b2b2" disabled><svg width="36" height="34" class="dim"><use href="#storey"/></svg>0. EG<svg class="chv ms-auto" style="color:#8a8a8a"><use href="#rt"/></svg></button>
   </div>
   <div class="d-flex align-items-center" style="height:76px;padding:0 4px">
    <button class="act me-auto" aria-label="Tauschen"><svg class="dim"><path d="M10 22H3Q1 22 1 20V3Q1 1 3 1H22Q24 1 24 3V9M9 8L27 26M9 15V8H17M27 19V26H19"/><path stroke="#9dbaf6" d="M27 12H34Q36 12 36 14V33Q36 35 34 35H15Q13 35 13 33V26"/></svg></button>
    <button class="act" aria-label="Bewegen"><svg class="dim"><path stroke="#9dbaf6" d="M10 24H3Q1 24 1 22V5Q1 3 3 3H21Q23 3 23 5V11"/><path d="M24 14V34M14 24H34M20 18L24 14L28 18M20 30L24 34L28 30M18 20L14 24L18 28M30 20L34 24L30 28"/></svg></button>
    <button class="act" aria-label="Drehen"><svg class="dim"><path stroke="#9dbaf6" d="M28 15L22 3L2 10L11 31L16 29"/><path d="M20 30Q32 30 33 18M29 20L33 16L36 20M24 26L19 30L24 33"/></svg></button>
    <button class="act" aria-label="Zurücksetzen"><svg class="dim"><path stroke="#9dbaf6" d="M12 22H3Q1 22 1 20V5Q1 3 3 3H20Q22 3 22 5M26 11H31Q33 11 33 13V29Q33 31 31 31H14Q12 31 12 29V26"/><path d="M28 24Q27 13 14 13M19 8L13 13L19 17"/></svg></button>
    <button class="act" aria-label="Aktualisieren"><svg class="dim"><circle cx="18" cy="17" r="15"/><path d="M9 16Q12 7 24 11M20 6L25 11L19 14M27 18Q24 27 12 24M16 29L11 24L17 20"/></svg></button>
   </div>
   <div class="rule"></div>
   <div class="faded" style="padding:14px 6px 12px 5px">Transparentpause:</div>
   <div class="d-flex" style="padding:0 6px;height:56px;gap:9px">
    <button class="lite d-flex align-items-center justify-content-between ps-2" style="width:56px" disabled aria-label="Farbe"><span style="width:24px;height:24px;background:#f39a8c;margin-left:4px"></span><svg class="chv" style="color:#999"><use href="#rt"/></svg></button>
    <div class="flex-grow-1" style="padding-top:12px"><input class="opac" type="range" value="100" disabled aria-label="Transparentpause"><div class="ticks d-flex justify-content-between"><i></i><i></i><i></i><i></i><i></i><i></i><i></i><i></i><i></i><i></i><i></i></div></div>
    <button class="lite d-flex align-items-center justify-content-center" style="width:26px;margin-left:-3px" disabled aria-label="Mehr"><svg class="chv" style="color:#888"><use href="#rt"/></svg></button>
   </div>
   <div class="faded" style="padding:11px 6px 11px 5px">Aktiv:</div>
   <div class="d-flex" style="padding:0 38px 0 6px;height:56px;gap:9px">
    <button class="lite d-flex align-items-center justify-content-between ps-2" style="width:56px" disabled aria-label="Farben"><svg width="28" height="26" class="dim"><path fill="#9ccc9f" d="M15 13V1A12 12 0 0 0 4 18Z"/><path fill="#f3a08f" d="M15 13V1A12 12 0 0 1 26 18Z"/><path fill="#9cb8f5" d="M15 13L4 18A12 12 0 0 0 26 18Z"/></svg><svg class="chv" style="color:#999"><use href="#rt"/></svg></button>
    <div class="flex-grow-1" style="padding-top:12px"><input class="opac" type="range" value="100" disabled aria-label="Aktiv"><div class="ticks d-flex justify-content-between"><i></i><i></i><i></i><i></i><i></i><i></i><i></i><i></i><i></i><i></i><i></i></div></div>
   </div>
   <div class="rule" style="margin-top:13px"></div>
   <div class="d-flex align-items-center flex-grow-1" style="padding:10px 0 0 65px">
    <button class="act" aria-label="Ziehen"><svg class="dim"><path stroke="#9dbaf6" d="M10 23H3Q1 23 1 21V3Q1 1 3 1H22Q24 1 24 3V8"/><path d="M20 35L13 25Q14 22 17 24L20 27L18 14Q20 12 21 14L24 20L24 11Q26 9 27 11L28 19L30 12Q32 11 32 13V20L34 16Q36 16 36 18L32 35"/></svg></button>
    <button class="act" aria-label="Überlagern"><svg class="dim"><path d="M10 20H4Q2 20 2 18V5Q2 3 4 3H21Q23 3 23 5V9M22 15V20H16"/><rect stroke="#9dbaf6" x="13" y="13" width="20" height="19" rx="2"/></svg></button>
    <button class="act" aria-label="Teilen"><svg class="dim"><path d="M15 6H3Q1 6 1 8V28Q1 30 3 30H15M18 3V34M14 13L9 18L14 23M22 13L27 18L22 23"/><path stroke="#9dbaf6" d="M21 6H32Q34 6 34 8V28Q34 30 32 30H21"/></svg></button>
    <button class="act" aria-label="Verbergen"><svg class="dim"><path d="M10 25H4V3H26V15M4 11L12 3M4 18L19 3M6 24L26 4M14 24L26 11M12 28Q22 16 35 26Q22 36 12 28M12 34L35 18"/></svg></button>
   </div>
   <div class="rule" style="background:#e3e3e3"></div>
  </aside>
 </div>

 <footer class="status d-flex align-items-center flex-shrink-0">
  <span>Klicken Sie mit dem Cursor auf ein Element oder ziehen Sie einen Auswahlbereich auf. Drücken Sie für Morphbearbeitung Strg/Ctrl+Umsch, um zwischen Element-/Unterelement-Auswahl zu wechseln.</span>
  <svg class="ms-auto" width="32" height="28"><path d="M1 18V1H26V4M7 8H31V27H7Z"/><path stroke-width="4" d="M2 2H25M8 10H30"/></svg>
  <span style="width:2px;height:30px;background:#999;margin:0 22px 0 20px"></span>
  <a href="#" class="brandmark text-decoration-none">GRAPHISOFT <span class="fw-light">ID</span></a>
 </footer>
</div>
<script>
// Hatches of the wall: diagonal brick lines and looped insulation
let brick='',wool='';
for(let i=0;i<10;i++){const y=522+i*136.7;brick+=`M1294 ${y}L1239 ${y+55}`}
const p=22.57,h=p/2;
for(let y=473.1;y<1900;y+=p){
  wool+=`M1324 ${y}L1369 ${y+h}M1324 ${y}L1369 ${y-h}`;
  wool+=`M1324 ${y}C1311 ${y+3} 1311 ${y+p-3} 1324 ${y+p}`;
  wool+=`M1369 ${y-h}C1384 ${y-h+3} 1384 ${y+h-3} 1369 ${y+h}`;
}
document.getElementById('brick').setAttribute('d',brick);
document.getElementById('wool').setAttribute('d',wool);
</script>
</body>
</html>
